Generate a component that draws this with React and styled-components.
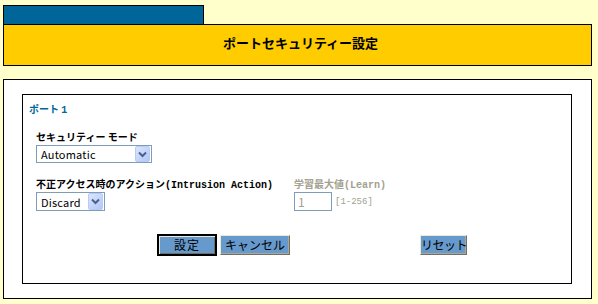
import React from "react";
import styled, { createGlobalStyle } from "styled-components";

const Global = createGlobalStyle`
  html, body { margin: 0; padding: 0; background: #ffffcc; }
  body { font-family: "Noto Sans CJK JP", "Noto Sans", sans-serif; }
`;

const Page = styled.div`
  padding: 5px 6px 0 3px;
  width: 589px;
`;

const Tab = styled.div`
  width: 199px;
  height: 18px;
  background: #006699;
  border: 1px solid #000;
  border-bottom: none;
`;

const Header = styled.div`
  height: 40px;
  background: #ffcc00;
  border: 1px solid #000;
  display: flex;
  align-items: center;
  justify-content: center;
`;

const Title = styled.h1`
  margin: 0 0 4px 6px;
  font-size: 13px;
  line-height: 16px;
  font-weight: 700;
  color: #000;
`;

const Outer = styled.div`
  margin-top: 13px;
  background: #fff;
  border: 1px solid #000;
  padding: 14px 19px 14px 18px;
`;

const Inner = styled.div`
  border: 1px solid #000;
  padding: 8px 0 27px 6px;
`;

const PortTitle = styled.div`
  height: 12px;
  font-size: 10px;
  line-height: 12px;
  font-weight: 700;
  color: #006699;
  white-space: nowrap;
`;

const Form = styled.div`
  padding-left: 7px;
`;

const Label = styled.div`
  margin-top: ${(p) => p.$mt || 0}px;
  height: 12px;
  font-size: 10px;
  line-height: 12px;
  font-weight: 700;
  white-space: nowrap;
  color: ${(p) => (p.$disabled ? "#a3a190" : "#000")};
`;

const Latin = styled.span`
  font-family: "Liberation Mono", "DejaVu Sans Mono", monospace;
  font-size: 10px;
  line-height: 10px;
  font-weight: 700;
`;

const Row = styled.div`
  display: flex;
`;

const Field = styled.div`
  width: ${(p) => p.$w}px;
`;

const Select = styled.div`
  margin-top: 2px;
  box-sizing: border-box;
  width: ${(p) => p.$w}px;
  height: ${(p) => p.$h}px;
  border: 1px solid #7f9db9;
  background: #fff;
  display: flex;
  align-items: center;
  justify-content: space-between;
  padding: 0 1px 0 4px;
`;

const SelectText = styled.span`
  font-family: "Noto Sans CJK JP", "Noto Sans", sans-serif;
  font-size: 11px;
  line-height: 14px;
  color: #000;
  letter-spacing: 0.2px;
`;

const Arrow = styled.span`
  box-sizing: border-box;
  width: 15px;
  height: ${(p) => p.$h}px;
  border: 1px solid #b9cbf3;
  border-radius: 2px;
  background: linear-gradient(135deg, #dbe6fd 0%, #c2d3fb 60%, #b2c7f7 100%);
  display: flex;
  align-items: center;
  justify-content: center;
`;

const InputRow = styled.div`
  margin-top: 2px;
  display: flex;
  align-items: center;
`;

const Input = styled.div`
  box-sizing: border-box;
  width: 38px;
  height: 19px;
  border: 1px solid #7f9db9;
  background: #fff;
  padding-left: 3px;
  font-size: 12px;
  line-height: 17px;
  color: #a3a190;
`;

const Hint = styled.span`
  margin-left: 3px;
  font-family: "Liberation Mono", "DejaVu Sans Mono", monospace;
  font-size: 9px;
  line-height: 12px;
  color: #a3a190;
`;

const Buttons = styled.div`
  margin-top: 23px;
  display: flex;
  align-items: center;
  padding-left: 128px;
`;

const Button = styled.button`
  box-sizing: border-box;
  margin: 0 0 0 ${(p) => p.$ml || 0}px;
  width: ${(p) => p.$w}px;
  height: ${(p) => (p.$default ? 22 : 20)}px;
  padding: 0;
  background: #6699cc;
  color: #000;
  font-family: "Noto Sans CJK JP", sans-serif;
  font-size: 12px;
  line-height: 14px;
  white-space: nowrap;
  border-style: solid;
  border-width: ${(p) => (p.$default ? 2 : 1)}px;
  border-color: ${(p) =>
    p.$default ? "#000" : "#ece9d8 #716f64 #716f64 #ece9d8"};
  box-shadow: ${(p) =>
    p.$default
      ? "inset 1px 1px 0 #ece9d8, inset -1px -1px 0 #716f64"
      : "inset -1px -1px 0 #aca899"};
  letter-spacing: ${(p) => p.$ls || 0}px;
`;

const Chevron = () => (
  <svg width="9" height="7" viewBox="0 0 9 7">
    <path d="M1 1.5 L4.5 5 L8 1.5" fill="none" stroke="#4d6185" strokeWidth="2" />
  </svg>
);

export default function App() {
  return (
    <>
      <Global />
      <Page>
        <Tab />
        <Header>
          <Title>ポートセキュリティー設定</Title>
        </Header>
        <Outer>
          <Inner>
            <PortTitle>
              ポート <Latin>1</Latin>
            </PortTitle>
            <Form>
              <Label $mt={16}>セキュリティー モード</Label>
              <Select $w={116} $h={18}>
                <SelectText>Automatic</SelectText>
                <Arrow $h={16}>
                  <Chevron />
                </Arrow>
              </Select>
              <Row>
                <Field $w={258}>
                  <Label $mt={15}>
                    不正アクセス時のアクション<Latin>(Intrusion Action)</Latin>
                  </Label>
                  <Select $w={69} $h={19}>
                    <SelectText>Discard</SelectText>
                    <Arrow $h={17}>
                      <Chevron />
                    </Arrow>
                  </Select>
                </Field>
                <Field $w={120}>
                  <Label $mt={15} $disabled>
                    学習最大値<Latin>(Learn)</Latin>
                  </Label>
                  <InputRow>
                    <Input>1</Input>
                    <Hint>[1-256]</Hint>
                  </InputRow>
                </Field>
              </Row>
            </Form>
            <Buttons>
              <Button $default $w={60} $ls={1}>設定</Button>
              <Button $w={70} $ml={3}>キャンセル</Button>
              <Button $w={47} $ml={130} $ls={-0.5}>リセット</Button>
            </Buttons>
          </Inner>
        </Outer>
      </Page>
    </>
  );
}
